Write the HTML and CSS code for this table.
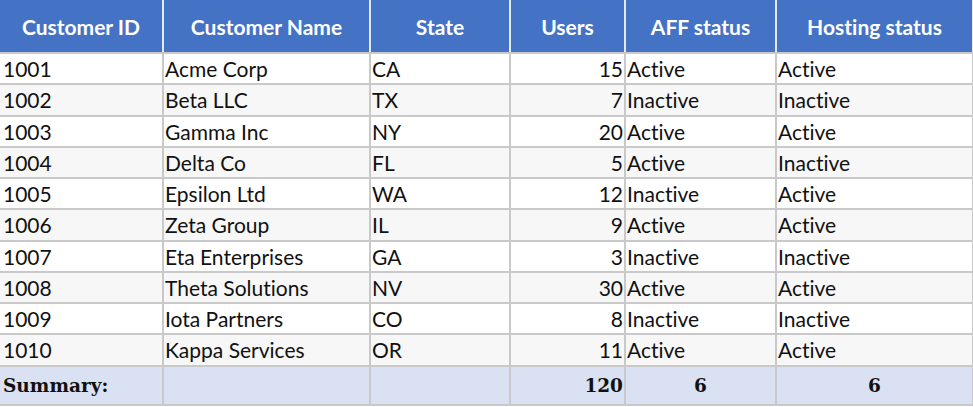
FILE: index.html
```html
<!DOCTYPE html>
<html>
<head>
<meta charset="utf-8">
<link rel="stylesheet" href="styles.css">
</head>
<body>
<table class="grid">
  <colgroup>
    <col class="c-id"><col class="c-name"><col class="c-state"><col class="c-users"><col class="c-aff"><col class="c-host">
  </colgroup>
  <thead>
    <tr>
      <th>Customer ID</th><th>Customer Name</th><th>State</th><th>Users</th><th>AFF status</th><th>Hosting status</th>
    </tr>
  </thead>
  <tbody>
    <tr><td>1001</td><td>Acme Corp</td><td>CA</td><td class="num">15</td><td>Active</td><td>Active</td></tr>
    <tr><td>1002</td><td>Beta LLC</td><td>TX</td><td class="num">7</td><td>Inactive</td><td>Inactive</td></tr>
    <tr><td>1003</td><td>Gamma Inc</td><td>NY</td><td class="num">20</td><td>Active</td><td>Active</td></tr>
    <tr><td>1004</td><td>Delta Co</td><td>FL</td><td class="num">5</td><td>Active</td><td>Inactive</td></tr>
    <tr><td>1005</td><td>Epsilon Ltd</td><td>WA</td><td class="num">12</td><td>Inactive</td><td>Active</td></tr>
    <tr><td>1006</td><td>Zeta Group</td><td>IL</td><td class="num">9</td><td>Active</td><td>Active</td></tr>
    <tr><td>1007</td><td>Eta Enterprises</td><td>GA</td><td class="num">3</td><td>Inactive</td><td>Inactive</td></tr>
    <tr><td>1008</td><td>Theta Solutions</td><td>NV</td><td class="num">30</td><td>Active</td><td>Active</td></tr>
    <tr><td>1009</td><td>Iota Partners</td><td>CO</td><td class="num">8</td><td>Inactive</td><td>Inactive</td></tr>
    <tr><td>1010</td><td>Kappa Services</td><td>OR</td><td class="num">11</td><td>Active</td><td>Active</td></tr>
  </tbody>
  <tfoot>
    <tr class="summary">
      <td>Summary:</td><td></td><td></td><td class="num">120</td><td class="center">6</td><td class="center">6</td>
    </tr>
  </tfoot>
</table>
</body>
</html>
```

FILE: styles.css
```css
html, body {
  margin: 0;
  padding: 0;
  background: #ffffff;
}

.grid {
  border-collapse: collapse;
  table-layout: fixed;
  width: 973px;
  font-family: Lato, "Liberation Sans", sans-serif;
  font-size: 21px;
  font-variant-ligatures: none;
  color: #111111;
}

.c-id { width: 163px; }
.c-name { width: 207px; }
.c-state { width: 140px; }
.c-users { width: 115px; }
.c-aff { width: 151px; }
.c-host { width: 197px; }

.grid th {
  background: #4472c4;
  color: #ffffff;
  font-weight: bold;
  font-size: 21px;
  height: 52px;
  padding: 0 4px;
  text-align: center;
  border: 2px solid #c9c9c9;
  border-top: none;
  border-left-color: #e4eaf5;
  border-right-color: #e4eaf5;
}

.grid th:first-child { border-left: none; }

.grid td {
  height: 29.25px;
  padding: 0 1px 0 1px;
  border: 2px solid #c9c9c9;
  white-space: nowrap;
  line-height: 29px;
}

.grid td:first-child {
  border-left: none;
  padding-left: 3px;
}

.grid tbody tr:nth-child(even) td { background: #f7f7f7; }

.grid td.num { text-align: right; }
.grid td.center { text-align: center; }

.summary td {
  background: #d9e1f2;
  height: 37px;
  font-family: "DejaVu Serif", serif;
  font-weight: bold;
  font-size: 18.5px;
}
```
